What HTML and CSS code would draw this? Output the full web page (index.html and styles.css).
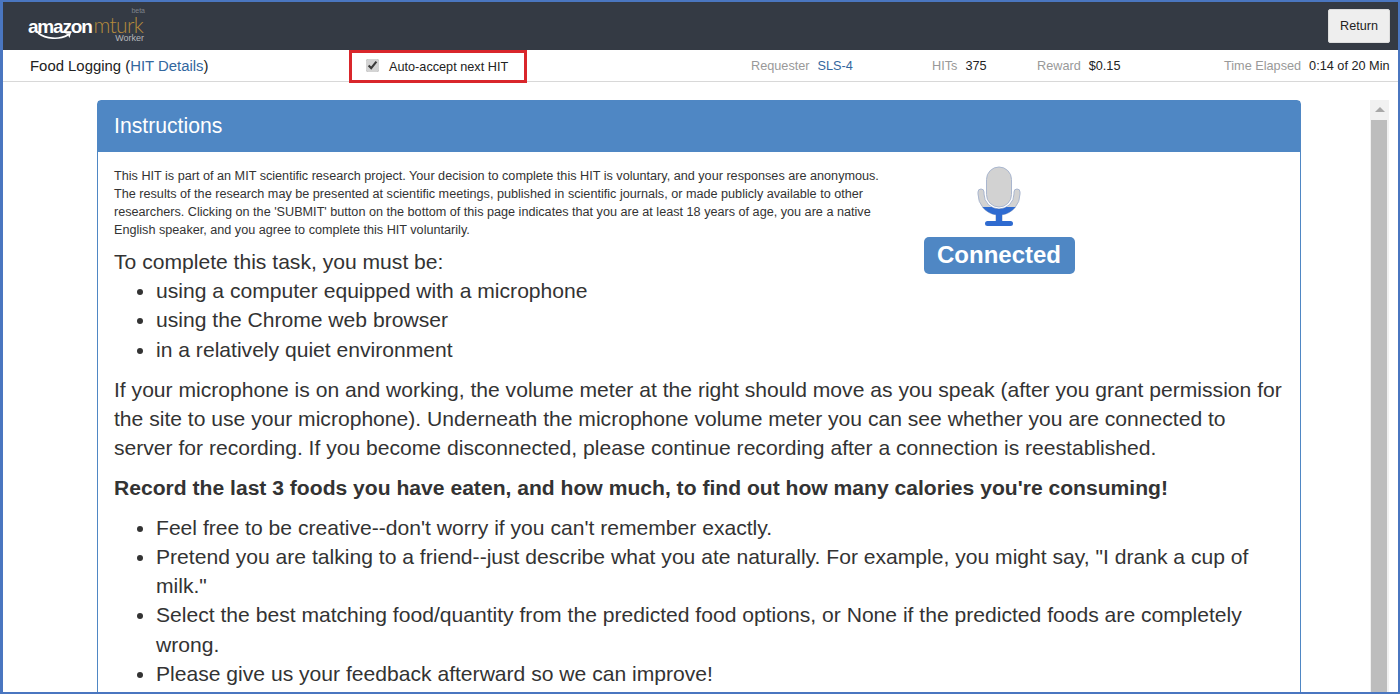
FILE: index.html
```html
<!DOCTYPE html>
<html dir="ltr" lang="en">

<head>
  <meta charset="utf-8" />
  <title>Food Logging</title>
  <link rel="stylesheet" href="styles.css">
</head>

<body>
  <div class="frame">
    <header class="topbar">
      <div class="logo">
        <span class="logo-beta">beta</span>
        <span class="logo-amazon">amazon</span><span class="logo-mturk">mturk</span>
        <svg class="logo-smile" width="36" height="9" viewBox="0 0 36 9">
          <path d="M1 1C9 7 22 8 31 3" fill="none" stroke="#fff" stroke-width="1.6" />
          <path d="M28 1.4L34 1L32.4 6L31.2 3.4Z" fill="#fff" />
        </svg>
        <span class="logo-worker">Worker</span>
      </div>
      <button class="return-btn">Return</button>
    </header>

    <div class="hitbar">
      <div class="hit-title">Food Logging (<a href="#">HIT Details</a>)</div>
      <label class="auto-accept"><input type="checkbox" checked> Auto-accept next HIT</label>
      <div class="stat stat-requester"><span class="stat-label">Requester</span><a href="#">SLS-4</a></div>
      <div class="stat stat-hits"><span class="stat-label">HITs</span><span>375</span></div>
      <div class="stat stat-reward"><span class="stat-label">Reward</span><span>$0.15</span></div>
      <div class="stat stat-time"><span class="stat-label">Time Elapsed</span><span>0:14 of 20 Min</span></div>
    </div>

    <div class="content">
      <section class="panel">
        <h2 class="panel-heading">Instructions</h2>
        <div class="panel-body">
          <div class="intro">
            <div class="intro-text">
              <p class="consent">This HIT is part of an MIT scientific research project. Your decision to complete this HIT is voluntary, and your responses are anonymous. The results of the research may be presented at scientific meetings, published in scientific journals, or made publicly available to other researchers. Clicking on the 'SUBMIT' button on the bottom of this page indicates that you are at least 18 years of age, you are a native English speaker, and you agree to complete this HIT voluntarily.</p>
              <p class="lead">To complete this task, you must be:</p>
              <ul>
                <li>using a computer equipped with a microphone</li>
                <li>using the Chrome web browser</li>
                <li>in a relatively quiet environment</li>
              </ul>
            </div>
            <div class="mic-status">
              <svg class="mic" width="44" height="62" viewBox="0 0 44 62">
                <defs>
                  <clipPath id="mic-level"><rect x="0" y="41" width="44" height="21" /></clipPath>
                </defs>
                <g fill="#d2d2d2" stroke="#a9b6cf">
                  <rect x="9.5" y="1" width="25" height="40" rx="12.5" />
                  <path d="M1 26a3 3 0 0 1 6 0v2a15 15 0 0 0 30 0v-2a3 3 0 0 1 6 0v2a21 21 0 0 1-18 20.8V55h-6v-6.2A21 21 0 0 1 1 28z" />
                </g>
                <path clip-path="url(#mic-level)" fill="#2f6bd0" d="M1 26a3 3 0 0 1 6 0v2a15 15 0 0 0 30 0v-2a3 3 0 0 1 6 0v2a21 21 0 0 1-18 20.8V55h-6v-6.2A21 21 0 0 1 1 28z" />
                <rect x="8" y="55" width="28" height="5" rx="2.5" fill="#2f6bd0" />
              </svg>
              <div class="connected">Connected</div>
            </div>
          </div>
          <p>If your microphone is on and working, the volume meter at the right should move as you speak (after you grant permission for the site to use your microphone). Underneath the microphone volume meter you can see whether you are connected to server for recording. If you become disconnected, please continue recording after a connection is reestablished.</p>
          <p class="strong">Record the last 3 foods you have eaten, and how much, to find out how many calories you're consuming!</p>
          <ul>
            <li>Feel free to be creative--don't worry if you can't remember exactly.</li>
            <li>Pretend you are talking to a friend--just describe what you ate naturally. For example, you might say, "I drank a cup of milk."</li>
            <li>Select the best matching food/quantity from the predicted food options, or None if the predicted foods are completely wrong.</li>
            <li>Please give us your feedback afterward so we can improve!</li>
          </ul>
        </div>
      </section>
      <div class="scrollbar">
        <div class="scroll-up"></div>
        <div class="scroll-thumb"></div>
      </div>
    </div>
  </div>
</body>

</html>
```

FILE: styles.css
```css
html,
body {
  margin: 0;
  height: 100%;
  overflow: hidden;
}

body {
  font-family: 'Liberation Sans', Arial, sans-serif;
  font-size: 12.7px;
  color: #333;
  background: #fff;
}

a {
  color: #33679e;
  text-decoration: none;
}

.frame {
  box-sizing: border-box;
  height: 694px;
  border: 2px solid #4a76c0;
  border-left-width: 3px;
  overflow: hidden;
  display: flex;
  flex-direction: column;
}

.topbar {
  flex: none;
  height: 48px;
  background: #343a44;
  display: flex;
  align-items: center;
  justify-content: space-between;
  padding: 0 8px 0 25px;
}

.logo {
  position: relative;
  width: 117px;
  height: 40px;
  white-space: nowrap;
  line-height: 1;
}

.logo-amazon,
.logo-mturk {
  display: inline-block;
  height: 17px;
  line-height: 17px;
  margin-top: 10px;
}

.logo-amazon {
  color: #fff;
  font-weight: bold;
  font-size: 19px;
  letter-spacing: -1.2px;
  margin-right: 2px;
}

.logo-mturk {
  color: #b58a3c;
  font-family: 'Lato', sans-serif;
  font-weight: 300;
  font-size: 21px;
  letter-spacing: -0.7px;
}

.logo-beta,
.logo-worker {
  position: absolute;
  line-height: 1;
}

.logo-beta {
  right: 0;
  top: 1px;
  font-size: 7px;
  color: #7f848b;
}

.logo-worker {
  right: 1px;
  top: 28px;
  font-size: 9px;
  color: #b5b7ba;
}

.logo-smile {
  position: absolute;
  left: 9px;
  top: 26px;
}

.return-btn {
  width: 62px;
  height: 34px;
  font-family: inherit;
  font-size: 12.6px;
  color: #222;
  background: #eee;
  border: 1px solid #ddd;
  border-radius: 2px;
  padding: 0;
}

.hitbar {
  flex: none;
  height: 32px;
  box-sizing: border-box;
  border-bottom: 1px solid #d8d8d8;
  display: flex;
  align-items: center;
  padding-left: 27px;
  color: #222;
}

.hit-title {
  width: 319px;
  font-size: 14.9px;
}

.auto-accept {
  box-sizing: border-box;
  width: 178px;
  height: 33px;
  border: 3px solid #d9262b;
  display: flex;
  align-items: center;
  gap: 10px;
  padding-left: 14px;
  margin-top: 2px;
}

.auto-accept input {
  margin: 0 0 2px;
  width: 13px;
  height: 13px;
  accent-color: #d4d4d4;
}

.stat {
  display: flex;
  gap: 8px;
}

.stat-label {
  color: #999;
}

.stat-requester {
  margin-left: 224px;
  width: 181px;
}

.stat-hits {
  width: 105px;
}

.stat-reward {
  width: 187px;
}

.content {
  flex: 1;
  display: flex;
  align-items: flex-start;
  padding: 18px 0 0 94px;
  min-height: 0;
}

.panel {
  flex: none;
  width: 1204px;
  box-sizing: border-box;
  border: 1px solid #4f87c4;
  border-radius: 4px 4px 0 0;
}

.panel-heading {
  margin: 0;
  height: 51px;
  line-height: 49px;
  padding-left: 16px;
  background: #4f87c4;
  color: #fff;
  font-size: 21.2px;
  font-weight: normal;
}

.panel-body {
  padding: 15px 16px 0;
  font-size: 21.1px;
  line-height: 29.2px;
}

.panel-body p {
  margin: 0 0 10.7px;
}

.panel-body ul {
  margin: 0 0 10.7px;
  padding-left: 42px;
}

.intro {
  display: flex;
}

.intro-text {
  width: 770px;
}

.panel-body .consent {
  font-size: 12.65px;
  line-height: 18px;
  margin: 0 0 8px;
}

.panel-body .lead {
  margin: 0;
}

.panel-body .strong {
  font-weight: bold;
}

.mic-status {
  width: 230px;
  margin-top: -1px;
  display: flex;
  flex-direction: column;
  align-items: center;
}

.mic {
  display: block;
}

.connected {
  margin-top: 9px;
  width: 151px;
  height: 37px;
  line-height: 35px;
  text-align: center;
  background: #4f87c4;
  color: #fff;
  font-size: 24px;
  font-weight: bold;
  border-radius: 5px;
}

.scrollbar {
  flex: none;
  margin-left: 69px;
  width: 19px;
  height: 600px;
  background: #f1f1f1;
}

.scroll-up {
  height: 20px;
  position: relative;
}

.scroll-up::after {
  content: '';
  position: absolute;
  left: 5px;
  top: 7px;
  border-left: 5px solid transparent;
  border-right: 5px solid transparent;
  border-bottom: 5px solid #a8a8a8;
}

.scroll-thumb {
  margin: 0 2px 0 1px;
  height: 580px;
  background: #bdbdbd;
}
```
